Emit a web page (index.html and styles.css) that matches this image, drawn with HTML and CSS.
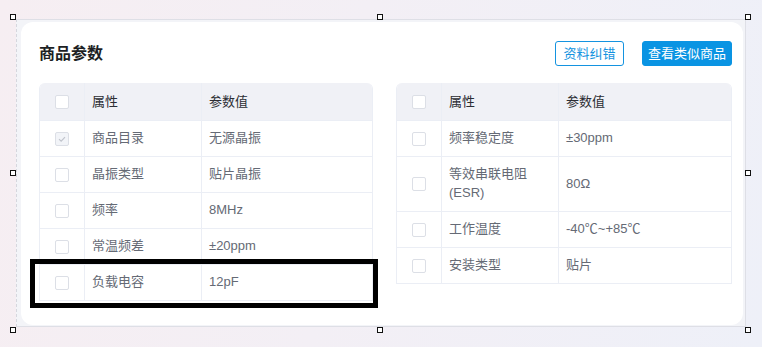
FILE: index.html
```html
<!DOCTYPE html>
<html lang="zh-CN">
<head>
<meta charset="utf-8">
<title>商品参数</title>
<link rel="stylesheet" href="styles.css">
</head>
<body>
<div class="stage">
  <div class="frame">
    <div class="card">
      <div class="card-head">
        <h2 class="title">商品参数</h2>
        <div class="actions">
          <button class="btn btn-outline">资料纠错</button>
          <button class="btn btn-primary">查看类似商品</button>
        </div>
      </div>
      <div class="tables">
        <table class="ptable">
          <colgroup><col class="c-check"><col class="c-attr"><col></colgroup>
          <thead>
            <tr><th><span class="cb"></span></th><th>属性</th><th>参数值</th></tr>
          </thead>
          <tbody>
            <tr><td><span class="cb cb-checked"><svg viewBox="0 0 14 14" width="12" height="12"><path d="M3.5 7.2 L6 9.5 L10.5 4.8" fill="none" stroke="#c0c4cc" stroke-width="1.4"/></svg></span></td><td>商品目录</td><td>无源晶振</td></tr>
            <tr><td><span class="cb"></span></td><td>晶振类型</td><td>贴片晶振</td></tr>
            <tr><td><span class="cb"></span></td><td>频率</td><td>8MHz</td></tr>
            <tr><td><span class="cb"></span></td><td>常温频差</td><td>±20ppm</td></tr>
            <tr><td><span class="cb"></span></td><td>负载电容</td><td>12pF</td></tr>
          </tbody>
        </table>
        <table class="ptable">
          <colgroup><col class="c-check"><col class="c-attr"><col></colgroup>
          <thead>
            <tr><th><span class="cb"></span></th><th>属性</th><th>参数值</th></tr>
          </thead>
          <tbody>
            <tr><td><span class="cb"></span></td><td>频率稳定度</td><td>±30ppm</td></tr>
            <tr><td><span class="cb"></span></td><td>等效串联电阻<br>(ESR)</td><td>80Ω</td></tr>
            <tr><td><span class="cb"></span></td><td>工作温度</td><td>-40℃~+85℃</td></tr>
            <tr><td><span class="cb"></span></td><td>安装类型</td><td>贴片</td></tr>
          </tbody>
        </table>
      </div>
    </div>
  </div>
  <div class="highlight"></div>
  <span class="handle h-tl"></span>
  <span class="handle h-tm"></span>
  <span class="handle h-tr"></span>
  <span class="handle h-ml"></span>
  <span class="handle h-mr"></span>
  <span class="handle h-bl"></span>
  <span class="handle h-bm"></span>
  <span class="handle h-br"></span>
</div>
</body>
</html>
```

FILE: styles.css
```css
* { box-sizing: border-box; }
html, body { margin: 0; padding: 0; }
body {
  width: 762px;
  height: 347px;
  overflow: hidden;
  font-family: "Liberation Sans", "Noto Sans CJK SC", sans-serif;
  background: linear-gradient(100deg, #f6eef2 0%, #f3eff5 45%, #eef0f8 100%);
}
.stage {
  position: relative;
  width: 762px;
  height: 347px;
  padding: 19px 0 0 16px;
}
.frame {
  width: 730px;
  height: 308px;
  background: #f3f4f8;
  border-top: 1px solid #dedfe6;
  border-bottom: 1px solid #dedfe6;
  border-right: 1px solid #dedfe6;
  border-left: 1px dashed #d6d7de;
  padding: 2px 2px 1px 4px;
  display: flex;
}
.card {
  flex: 1;
  background: #ffffff;
  border-radius: 12px;
  padding: 19px 11px 0 18px;
}
.card-head {
  display: flex;
  align-items: center;
  justify-content: space-between;
  height: 25px;
}
.title {
  margin: 0;
  font-size: 16px;
  font-weight: bold;
  color: #1d1f24;
  line-height: 25px;
}
.actions {
  display: flex;
  gap: 18px;
}
.btn {
  font-family: inherit;
  font-size: 13px;
  height: 25px;
  line-height: 23px;
  padding: 0;
  text-align: center;
  white-space: nowrap;
  border-radius: 3px;
  border: 1px solid #1493e0;
  cursor: pointer;
}
.btn-outline {
  width: 69px;
  background: #ffffff;
  color: #1493e0;
}
.btn-primary {
  width: 90px;
  background: #0a94e3;
  color: #ffffff;
  border-color: #0a94e3;
}
.tables {
  margin-top: 17px;
  display: grid;
  grid-template-columns: 334px 336px;
  column-gap: 23px;
  align-items: start;
}
.ptable {
  width: 100%;
  border-collapse: separate;
  border-spacing: 0;
  table-layout: fixed;
  font-size: 13px;
  border-left: 1px solid #ebeef5;
  border-right: 1px solid #ebeef5;
  border-radius: 6px 6px 0 0;
  overflow: hidden;
}
.c-check { width: 44px; }
.c-attr { width: 117px; }
.ptable th, .ptable td {
  text-align: left;
  line-height: 19px;
  padding: 8px 7px;
  border-bottom: 1px solid #ebeef5;
  vertical-align: middle;
}
.ptable th + th, .ptable td + td {
  border-left: 1px solid #ebeef5;
}
.ptable th {
  background: #f0f1f6;
  color: #2b2d33;
  font-weight: normal;
  padding-top: 9px;
  padding-bottom: 9px;
}
.ptable th:first-child, .ptable td:first-child { text-align: center; padding: 0; }
.ptable td { color: #656a75; }
.ptable tbody td { padding-top: 7px; padding-bottom: 9px; }
.ptable tbody td:first-child { padding: 0; }
.cb {
  display: inline-block;
  width: 14px;
  height: 14px;
  border: 1px solid #dcdfe6;
  border-radius: 2px;
  background: #ffffff;
  vertical-align: middle;
  position: relative;
  top: -1px;
}
.cb-checked {
  background: #f2f4f8;
  display: inline-flex;
  align-items: center;
  justify-content: center;
}
.highlight {
  position: absolute;
  left: 30px;
  top: 259px;
  width: 348px;
  height: 49px;
  border: 5px solid #000000;
}
.handle {
  position: absolute;
  width: 6px;
  height: 6px;
  background: #ffffff;
  border: 1px solid #111111;
}
.h-tl { left: 10px; top: 14px; }
.h-tm { left: 377px; top: 14px; }
.h-tr { left: 745px; top: 14px; }
.h-ml { left: 10px; top: 170px; }
.h-mr { left: 745px; top: 170px; }
.h-bl { left: 10px; top: 327px; }
.h-bm { left: 377px; top: 327px; }
.h-br { left: 745px; top: 327px; }
```
